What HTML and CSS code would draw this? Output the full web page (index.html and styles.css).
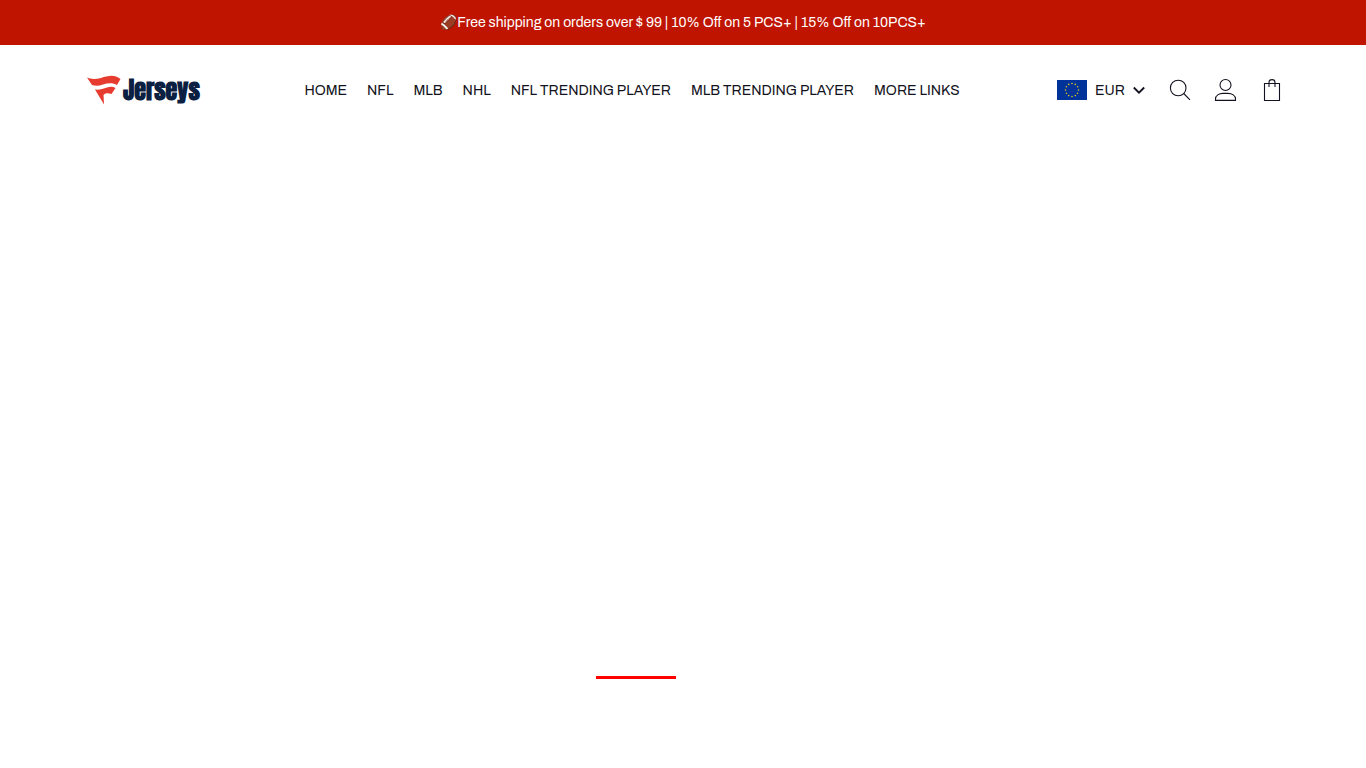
FILE: index.html
```html
<!DOCTYPE html>
<html lang="en">
<head>
<meta charset="utf-8">
<meta name="viewport" content="width=device-width, initial-scale=1">
<title>Jerseys</title>
<link rel="stylesheet" href="styles.css">
</head>
<body>
<div class="announcement">🏈Free shipping on orders over $ 99 | 10% Off on 5 PCS+ | 15% Off on 10PCS+</div>
<header class="header">
  <a class="logo" href="#">
    <svg class="logo-mark" viewBox="0 0 34 30" aria-hidden="true">
      <path d="M0 2.500C3 4 8 4.500 14 3C21 1 27-1 33.500 4L30 10C26 7.500 21 8 16 9.500C12 11 8 11 5 10Z" fill="#e63c2f"/>
      <path d="M8 14.500C12 15 16 14 20 12.500C23 11.500 26 11.500 28.500 13L24.500 19C21 18 18 18 16.500 20L17 29.500Z" fill="#e63c2f"/>
    </svg>
    <span class="logo-text">Jerseys</span>
  </a>
  <nav class="nav">
    <a href="#">HOME</a>
    <a href="#">NFL</a>
    <a href="#">MLB</a>
    <a href="#">NHL</a>
    <a href="#">NFL TRENDING PLAYER</a>
    <a href="#">MLB TRENDING PLAYER</a>
    <a href="#">MORE LINKS</a>
  </nav>
  <div class="tools">
    <button class="currency" type="button" aria-haspopup="listbox">
      <svg class="flag" viewBox="0 0 30 20" aria-hidden="true">
        <path d="M0 0h30v20H0z" fill="#039"/>
        <g fill="#d8c021">
          <circle cx="15" cy="3.5" r=".8"/><circle cx="18.3" cy="4.4" r=".8"/><circle cx="20.6" cy="6.8" r=".8"/>
          <circle cx="21.5" cy="10" r=".8"/><circle cx="20.6" cy="13.2" r=".8"/><circle cx="18.3" cy="15.6" r=".8"/>
          <circle cx="15" cy="16.5" r=".8"/><circle cx="11.7" cy="15.6" r=".8"/><circle cx="9.4" cy="13.2" r=".8"/>
          <circle cx="8.5" cy="10" r=".8"/><circle cx="9.4" cy="6.8" r=".8"/><circle cx="11.7" cy="4.4" r=".8"/>
        </g>
      </svg>
      <span>EUR</span>
      <svg class="chevron" viewBox="0 0 12 12" aria-hidden="true"><path d="M.8 3.500L6 8.700L11.200 3.500"/></svg>
    </button>
    <div class="icons">
      <button class="icon-button" type="button" aria-label="Search">
        <svg viewBox="0 0 24 24"><circle cx="10.200" cy="10" r="7.800"/><path d="M15.700 15.500L22 21.800"/></svg>
      </button>
      <button class="icon-button" type="button" aria-label="Account">
        <svg viewBox="0 0 24 24"><circle cx="11.500" cy="7" r="5.500"/><path d="M1.500 22.400V21C1.500 17.500 5 15.400 9 15.400H14C18 15.400 21.500 17.500 21.500 21V22.400Z"/></svg>
      </button>
      <button class="icon-button" type="button" aria-label="Cart">
        <svg viewBox="0 0 24 24"><path d="M4.500 5.500H19.500V22.500H4.500ZM9 9V4.500C9 .6 15 .6 15 4.500V9"/></svg>
      </button>
    </div>
  </div>
</header>
<main class="content">
  <div class="loader" role="progressbar" aria-label="Loading"><div class="loader-bar"></div></div>
</main>
</body>
</html>
```
FILE: styles.css
```css
* { box-sizing: border-box; }

body {
  margin: 0;
  min-height: 100vh;
  display: flex;
  flex-direction: column;
  background: #fff;
  color: #121220;
  font: 14px/21px Archivo, "Liberation Sans", Arial, sans-serif;
}

a { color: inherit; text-decoration: none; }

button {
  padding: 0;
  border: 0;
  background: none;
  color: inherit;
  font: inherit;
  cursor: pointer;
}

.announcement {
  padding: 12px 16px;
  background: #bf1400;
  color: #fff;
  text-align: center;
}

.header {
  display: flex;
  align-items: center;
  justify-content: space-between;
  padding: 28px 82px 28px 87px;
}

.logo {
  display: flex;
  align-items: center;
  gap: 2px;
  min-width: 120px;
}

.logo-mark { width: 34px; height: 30px; }

.logo-text {
  color: #0c2041;
  font: 900 24px/34px Impact, Anton, Roboto, sans-serif;
}

.nav { display: flex; gap: 20px; white-space: nowrap; }

.tools { display: flex; align-items: center; gap: 23px; }
.currency { display: flex; align-items: center; gap: 8px; }
.flag { width: 30px; height: 20px; }
.chevron { width: 12px; height: 12px; }
.icons { display: flex; gap: 22px; }
.icon-button { display: flex; }
.icon-button svg { width: 24px; height: 24px; }

.chevron,
.icon-button svg {
  fill: none;
  stroke: #121220;
  stroke-width: 1.1;
}

.currency .chevron { stroke-width: 1.8; }

.content {
  flex: 1;
  display: flex;
  flex-direction: column;
  align-items: center;
  justify-content: flex-end;
  padding-bottom: 89px;
}

.loader { width: 174px; }
.loader-bar { width: 80px; height: 3px; background: #f00; }
```
